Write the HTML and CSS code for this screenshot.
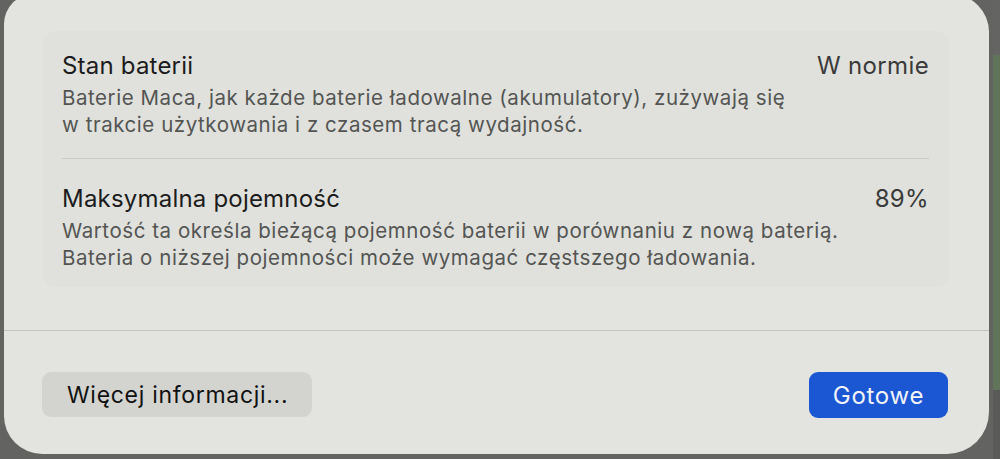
FILE: index.html
```html
<!DOCTYPE html>
<html lang="pl">
  <head>
    <meta charset="UTF-8" />
    <meta name="viewport" content="width=device-width, initial-scale=1.0" />
    <title>Stan baterii</title>
    <link rel="stylesheet" href="styles.css">
  </head>
  <body>
    <div class="sheet">
      <div class="group">
        <div class="row">
          <div class="row-head">
            <span class="row-title">Stan baterii</span>
            <span class="row-value">W normie</span>
          </div>
          <p class="row-desc">
            Baterie Maca, jak każde baterie ładowalne (akumulatory), zużywają się<br />
            w trakcie użytkowania i z czasem tracą wydajność.
          </p>
        </div>
        <div class="row">
          <div class="row-head">
            <span class="row-title">Maksymalna pojemność</span>
            <span class="row-value">89%</span>
          </div>
          <p class="row-desc">
            Wartość ta określa bieżącą pojemność baterii w porównaniu z nową baterią.<br />
            Bateria o niższej pojemności może wymagać częstszego ładowania.
          </p>
        </div>
      </div>

      <div class="footer">
        <button class="btn">Więcej informacji...</button>
        <button class="btn btn-primary">Gotowe</button>
      </div>
    </div>
  </body>
</html>
```

FILE: styles.css
```css
* {
  margin: 0;
  padding: 0;
  box-sizing: border-box;
}

html,
body {
  height: 100%;
  overflow: hidden;
}

body {
  background:
    linear-gradient(to bottom, #646462 0, #646462 55px, #5f7459 55px, #5f7459 390px, #5a5a58 390px) right top / 7px 100% no-repeat,
    #636361;
  font-family: Inter, "Liberation Sans", sans-serif;
}

.sheet {
  height: 460px;
  margin: -6px 11px 0 4px;
  background-color: #e3e4e0;
  border-radius: 30px 38px 42px 38px;
  padding-top: 37px;
}

.group {
  margin: 0 39px 0 38px;
  padding: 0 21px 0 20px;
  background-color: #e0e1dd;
  border-radius: 14px;
}

.row {
  padding: 20px 0 20px;
}

.row + .row {
  border-top: 1px solid #c9cac6;
  padding-top: 25px;
  padding-bottom: 16px;
}

.row-head {
  display: flex;
  justify-content: space-between;
  align-items: baseline;
  height: 30px;
}

.row-title {
  font-size: 24px;
  line-height: 30px;
  letter-spacing: 0.2px;
  color: #1c1c1c;
}

.row-value {
  font-size: 24px;
  line-height: 30px;
  letter-spacing: 0.35px;
  color: #3a3a3a;
}

.row-desc {
  margin-top: 3px;
  font-size: 20.5px;
  line-height: 27px;
  letter-spacing: 0.55px;
  color: #545553;
}

.footer {
  display: flex;
  justify-content: space-between;
  align-items: flex-start;
  margin-top: 43px;
  padding: 41px 41px 0 38px;
  border-top: 1px solid #c3c4c0;
}

.btn {
  height: 45px;
  padding: 0 24px 0 25px;
  border: none;
  border-radius: 9px;
  background-color: #d3d4d0;
  color: #111;
  font-family: Inter, "Liberation Sans", sans-serif;
  font-size: 23px;
  letter-spacing: 0.7px;
}

.btn-primary {
  width: 139px;
  height: 46px;
  padding: 0;
  background-color: #1b57d3;
  color: #f2f3f7;
  font-size: 24px;
}
```
